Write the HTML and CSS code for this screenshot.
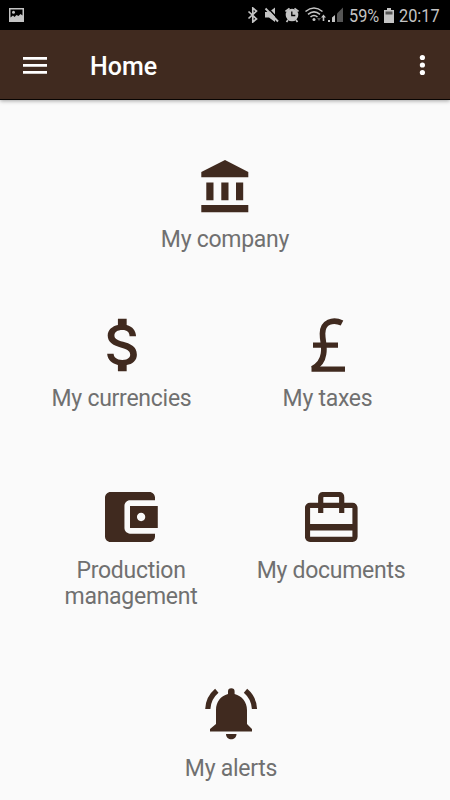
FILE: index.html
```html
<!DOCTYPE html>
<html lang="en">
<head>
<meta charset="utf-8">
<title>Home</title>
<link rel="stylesheet" href="styles.css">
</head>
<body>
<div class="status">
  <svg class="picture" width="15" height="14" viewBox="0 0 15 14"><path fill="#c4c4c4" fill-rule="evenodd" d="M0 0h15v14H0zM1.500 1.500v8l2.500-2 1.500 1.500 2-2 2 1 2-2 2 1.500V1.500z"/><circle cx="4.500" cy="4.200" r="1.500" fill="#c4c4c4"/></svg>
  <svg class="indicators" width="98" height="16" viewBox="247 7 98 16">
    <path d="M248.500 11.500l8 7.500-3.700 3V8l3.700 3-8 7.500" fill="none" stroke="#c4c4c4" stroke-width="1.700"/>
    <path d="M265 12h4l6-4.500v14.500l-6-4.500h-4z" fill="#c4c4c4"/>
    <path d="M267.500 7.500l13 14" stroke="#000" stroke-width="1.500"/>
    <path d="M265.500 8.500l12.500 13" stroke="#c4c4c4" stroke-width="1.900"/>
    <circle cx="292" cy="15" r="6.300" fill="#c4c4c4"/>
    <path d="M285.500 11.500l4-3.200M298.500 11.500l-4-3.200M288 20l-1.500 2M296 20l1.500 2" stroke="#c4c4c4" stroke-width="1.700"/>
    <path d="M291.800 11.500v4h3.500" fill="none" stroke="#000" stroke-width="1.300"/>
    <path d="M305.500 11.500q8.500-7 17 0M308 14.300q6-5 12 0M310.500 17q3.500-3 7 0" fill="none" stroke="#c4c4c4" stroke-width="1.600"/>
    <circle cx="314" cy="19.500" r="1.500" fill="#c4c4c4"/>
    <path d="M317 18h4l-2 3z" fill="#555"/>
    <path d="M321 17.500l2.500-3 2.500 3h-1.700V21h-1.600v-3.500z" fill="#c4c4c4"/>
    <path d="M328 20h2v2h-2zM332 17.500l3-2.500v7h-3z" fill="#c4c4c4"/>
    <path d="M337 13.500l6-6V22h-6z" fill="#555"/>
  </svg>
  <span class="battery-level">59%</span>
  <svg class="battery" width="10" height="15" viewBox="0 0 10 15"><path fill="#c4c4c4" d="M3 0h4v2h3v13H0V2h3z"/><path fill="#555" d="M1.500 3.500h7v3h-7z"/></svg>
  <span class="clock">20:17</span>
</div>
<header class="appbar">
  <svg class="menu" width="24" height="17" viewBox="0 0 24 17"><path fill="#fff" d="M0 0h24v2.700H0zM0 7h24v2.700H0zM0 14h24v2.700H0z"/></svg>
  <h1>Home</h1>
  <svg class="more" width="6" height="22" viewBox="0 0 6 22"><g fill="#fff"><circle cx="3.400" cy="3.500" r="2.600"/><circle cx="3.400" cy="11" r="2.600"/><circle cx="3.400" cy="18.500" r="2.600"/></g></svg>
</header>
<main>
  <div class="row first">
    <a class="tile">
      <svg width="48" height="54" viewBox="201 159 48 54"><path d="M225 160l23.300 12v5.300h-47V172zM206.300 182.500h7.200v17.700h-7.200zM221.300 182.500h7.200v17.700h-7.200zM236 182.500h7.200v17.700H236zM201.300 205h47v7.200h-47z"/></svg>
      <span>My company</span>
    </a>
  </div>
  <div class="row second">
    <a class="tile">
      <svg width="30" height="54" viewBox="6.300 2.750 10.200 18.500"><path d="M11.800 10.900c-2.270-.59-3-1.200-3-2.150 0-1.090 1.010-1.850 2.700-1.850 1.780 0 2.440.85 2.500 2.100h2.210c-.07-1.720-1.120-3.300-3.210-3.810V3h-3v2.160c-1.940.42-3.500 1.680-3.500 3.610 0 2.310 1.910 3.460 4.700 4.130 2.500.6 3 1.480 3 2.410 0 .69-.49 1.790-2.700 1.790-2.060 0-2.870-.92-2.980-2.100h-2.200c.12 2.190 1.760 3.420 3.680 3.830V21h3v-2.150c1.950-.37 3.500-1.500 3.500-3.550 0-2.840-2.430-3.810-4.700-4.400z"/></svg>
      <span>My currencies</span>
    </a>
    <a class="tile">
      <svg width="36" height="54" viewBox="310 318 36 54"><path d="M342 323C333 318.500 322.500 322 322.500 333.500C322.500 342 325 346 323.500 354C322.500 361 319 365.500 312.500 368.800" class="line pound"/><path d="M311.500 366.500H345v5.200H311.500zM313 342.600h25v5.200h-25z"/></svg>
      <span>My taxes</span>
    </a>
  </div>
  <div class="row third">
    <a class="tile">
      <svg width="53" height="50" viewBox="3 3 19.080 18"><path d="M21 18v1c0 1.100-.9 2-2 2H5c-1.110 0-2-.9-2-2V5c0-1.100.89-2 2-2h14c1.100 0 2 .9 2 2v1h-9c-1.110 0-2 .9-2 2v8c0 1.100.89 2 2 2h9zm-9-2h10V8H12v8zm4-2.500c-.83 0-1.500-.67-1.500-1.500s.67-1.500 1.500-1.500 1.500.67 1.500 1.500-.67 1.500-1.500 1.500z"/></svg>
      <span>Production management</span>
    </a>
    <a class="tile">
      <svg width="53" height="50" viewBox="305 492 53 50"><rect x="307.500" y="505.300" width="47.500" height="34" rx="2.500" class="line"/><path d="M320.700 513v-15.500q0-3 3-3h15q3 0 3 3V513" class="line"/><path d="M307 524h48v6.500h-48z"/></svg>
      <span>My documents</span>
    </a>
  </div>
  <div class="row fourth">
    <a class="tile">
      <svg width="53" height="52" viewBox="205 689 53 52"><path d="M228 695v-2.500a3.300 3.300 0 0 1 6.600 0V695C242 697 247 703 247 711v14l5 5v2.500h-42V730l6-5v-14c0-8 4.500-14 12-16zM226 735h10.500c0 7-10.500 7-10.500 0z"/><path d="M207.800 710q.5-11 9-18.200M254.500 710q-.5-11-9-18.200" class="line"/></svg>
      <span>My alerts</span>
    </a>
  </div>
</main>
</body>
</html>
```
FILE: styles.css
```css
* { box-sizing: border-box; }
body { margin: 0; height: 800px; overflow: hidden; background: #fafafa; font-family: Roboto, sans-serif; }
svg { display: block; flex: none; }
.status { display: flex; align-items: center; height: 30px; padding: 0 10px 0 9px; background: #000; color: #c4c4c4; font-size: 18.5px; line-height: 30px; }
.indicators { margin-left: auto; }
.battery-level { width: 29px; margin-left: 4px; }
.battery { margin: 0 5px 0 6px; }
.clock { width: 41px; }
.battery-level, .clock { white-space: nowrap; transform: scaleX(.88); transform-origin: left; padding-top: 1px; }
.appbar { display: flex; align-items: center; height: 70px; padding: 0 25px 0 23px; background: #402a1f; border-bottom: 1px solid #080402; box-shadow: 0 1px 4px rgba(0, 0, 0, .35); color: #fff; }
.menu { margin-top: 1px; }
.appbar h1 { margin: 4px 0 0 43px; font-size: 25px; line-height: 30px; font-weight: 500; }
.more { margin-left: auto; }
main { padding-top: 59px; }
.row { display: flex; justify-content: center; }
.first { height: 159px; }
.second { height: 174px; padding-right: 1px; }
.third { height: 196px; padding-left: 12px; }
.fourth { height: 112px; padding-left: 12px; }
.tile { display: flex; flex-direction: column; align-items: center; width: 200px; color: #707070; font-size: 23px; line-height: 26px; letter-spacing: -.27px; text-align: center; }
.second .tile { width: 206px; }
.tile svg { fill: #402a1f; margin-bottom: 14px; }
.tile .line { fill: none; stroke: #402a1f; stroke-width: 5.2; }
.tile .pound { stroke-width: 5.7; }
.third svg, .fourth svg { margin-bottom: 16px; }
.third span { max-width: 150px; }
```
